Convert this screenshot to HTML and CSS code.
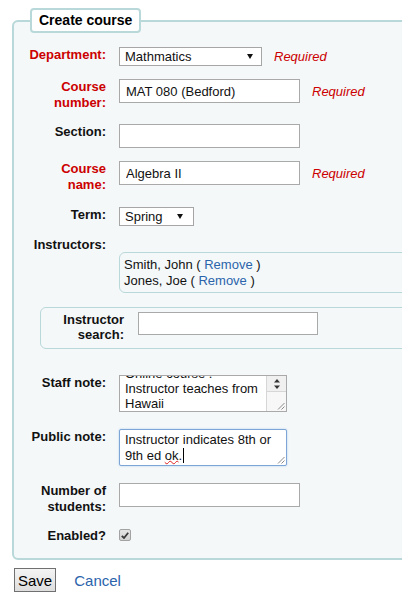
FILE: index.html
```html
<!DOCTYPE html>
<html>
<head>
<meta charset="utf-8">
<title>Create course</title>
<link rel="stylesheet" href="styles.css">
</head>
<body>
<form class="page">
  <fieldset class="main">
    <legend class="legend">Create course</legend>
    <ol class="rows">
      <li class="row mb13">
        <label class="lbl req">Department:</label>
        <span class="ctl">
          <span class="select-wrap w-dept">
            <select class="sel"><option>Mathmatics</option></select>
            <svg class="arrow" width="6" height="5" viewBox="0 0 6 5"><polygon points="0,0 6,0 3,5" fill="#111"/></svg>
          </span>
          <span class="required">Required</span>
        </span>
      </li>
      <li class="row mb13">
        <label class="lbl req">Course number:</label>
        <span class="ctl">
          <input class="txt" type="text" value="MAT 080 (Bedford)">
          <span class="required">Required</span>
        </span>
      </li>
      <li class="row mb13">
        <label class="lbl">Section:</label>
        <span class="ctl"><input class="txt" type="text" value=""></span>
      </li>
      <li class="row mb14">
        <label class="lbl req">Course name:</label>
        <span class="ctl">
          <input class="txt" type="text" value="Algebra II">
          <span class="required">Required</span>
        </span>
      </li>
      <li class="row mb12">
        <label class="lbl">Term:</label>
        <span class="ctl">
          <span class="select-wrap w-term">
            <select class="sel"><option>Spring</option></select>
            <svg class="arrow" width="6" height="5" viewBox="0 0 6 5"><polygon points="0,0 6,0 3,5" fill="#111"/></svg>
          </span>
        </span>
      </li>
      <li class="instr mb14">
        <label class="lbl lbl-instr">Instructors:</label>
        <div class="instr-box">
          <div>Smith, John ( <a class="link" href="#">Remove</a> )</div>
          <div>Jones, Joe ( <a class="link" href="#">Remove</a> )</div>
        </div>
      </li>
      <li class="mb26">
        <div class="search-box">
          <label class="lbl lbl-search">Instructor search:</label>
          <input class="txt txt-search" type="text" value="">
        </div>
      </li>
      <li class="row mb17">
        <label class="lbl">Staff note:</label>
        <div class="ta">
          <div class="ta-text">Online course .<br>Instructor teaches from<br>Hawaii</div>
          <div class="sb">
            <div class="sb-btn">
              <svg width="6" height="10" viewBox="0 0 6 10"><polygon points="3,0 6,3.5 0,3.5" fill="#333"/><polygon points="0,6.5 6,6.5 3,10" fill="#333"/></svg>
            </div>
          </div>
          <svg class="grip" width="9" height="9" viewBox="0 0 9 9"><line x1="8.5" y1="2" x2="2" y2="8.5" stroke="#8a8a8a"/><line x1="8.5" y1="5.5" x2="5.5" y2="8.5" stroke="#8a8a8a"/></svg>
        </div>
      </li>
      <li class="row mb17">
        <label class="lbl">Public note:</label>
        <div class="ta ta-focus">
          <div class="ta-text2">Instructor indicates 8th or<br>9th ed <span class="spell">ok</span>.<span class="caret"></span></div>
          <svg class="grip" width="9" height="9" viewBox="0 0 9 9"><line x1="8.5" y1="2" x2="2" y2="8.5" stroke="#8a8a8a"/><line x1="8.5" y1="5.5" x2="5.5" y2="8.5" stroke="#8a8a8a"/></svg>
        </div>
      </li>
      <li class="row mb13">
        <label class="lbl">Number of students:</label>
        <span class="ctl"><input class="txt" type="text" value=""></span>
      </li>
      <li class="row">
        <label class="lbl">Enabled?</label>
        <span class="chk">
          <svg width="8" height="7" viewBox="0 0 8 7"><polyline points="0.8,3.8 3,6 7.2,0.8" fill="none" stroke="#3a3a3a" stroke-width="1.8"/></svg>
        </span>
      </li>
    </ol>
  </fieldset>
  <div class="actions">
    <button class="btn" type="button">Save</button>
    <a class="cancel" href="#">Cancel</a>
  </div>
</form>
</body>
</html>
```
FILE: styles.css
```css
html, body {
  overflow: hidden;
}
body {
  margin: 8px 0 0 12px;
  font-family: "Liberation Sans", Arial, sans-serif;
  font-size: 13px;
  color: #000;
  background: #fff;
}
.page {
  margin: 0;
}
.main {
  margin: 0 -80px 8px 0;
  padding: 14px 0 14px 14px;
  border: 2px solid #b9d8d9;
  border-radius: 6px;
  background: #f4f8f9;
  min-width: 0;
}
.legend {
  margin-left: 2px;
  padding: 2px 7px;
  border: 2px solid #b9d8d9;
  border-radius: 4px;
  background: #fff;
  font-weight: bold;
  font-size: 14px;
  line-height: 17px;
}
.rows {
  list-style: none;
  margin: 0;
  padding: 0;
}
.row {
  display: flex;
  align-items: flex-start;
}
.mb12 { margin-bottom: 12px; }
.mb13 { margin-bottom: 13px; }
.mb14 { margin-bottom: 14px; }
.mb17 { margin-bottom: 17px; }
.mb26 { margin-bottom: 26px; }
.lbl {
  flex: none;
  width: 78px;
  margin-right: 13px;
  text-align: right;
  font-weight: bold;
  line-height: 16px;
  color: #111;
}
.req {
  color: #c00;
}
.ctl {
  display: flex;
  align-items: center;
  gap: 12px;
}
.required {
  color: #c00;
  font-style: italic;
}
.select-wrap {
  position: relative;
  display: inline-block;
}
.w-dept { width: 143px; }
.w-term { width: 75px; }
.sel {
  -webkit-appearance: none;
  appearance: none;
  display: block;
  box-sizing: border-box;
  width: 100%;
  height: 19px;
  margin: 0;
  padding: 0 16px 0 5px;
  border: 1px solid #a6a6a6;
  border-radius: 0;
  background: #fff;
  color: #111;
  font-family: inherit;
  font-size: 13px;
}
.arrow {
  position: absolute;
  right: 9px;
  top: 7px;
}
.w-term .arrow {
  right: 11px;
}
.txt {
  box-sizing: border-box;
  width: 181px;
  height: 24px;
  margin: 0;
  padding: 0 6px;
  border: 1px solid #a9a9a9;
  background: #fff;
  color: #111;
  font-family: inherit;
  font-size: 13px;
}
.instr {
  display: block;
}
.lbl-instr {
  display: block;
  line-height: 14px;
}
.instr-box {
  margin-left: 91px;
  padding: 4px 4px 3px;
  border: 1px solid #b9d8d9;
  border-radius: 6px;
  line-height: 16px;
  color: #111;
}
.link {
  color: #2b64ab;
  text-decoration: none;
}
.search-box {
  display: flex;
  align-items: flex-start;
  margin-left: 12px;
  padding: 4px 0 6px;
  border: 1px solid #b9d8d9;
  border-radius: 6px;
}
.lbl-search {
  width: 83px;
  margin-right: 14px;
  line-height: 15px;
}
.txt-search {
  width: 180px;
  height: 23px;
}
.ta {
  position: relative;
  display: flex;
  box-sizing: border-box;
  width: 168px;
  height: 37px;
  border: 1px solid #a9a9a9;
  background: #fff;
  overflow: hidden;
  color: #111;
}
.ta-text {
  flex: 1;
  margin-top: -10px;
  padding-left: 5px;
  line-height: 15px;
  white-space: nowrap;
}
.sb {
  flex: none;
  width: 19px;
  border-left: 1px solid #d6d6d6;
  background: #f7f7f7;
}
.sb-btn {
  display: flex;
  align-items: center;
  justify-content: center;
  height: 15px;
  border-bottom: 1px solid #d6d6d6;
  background: #f0f0f0;
}
.grip {
  position: absolute;
  right: 1px;
  bottom: 1px;
}
.ta-focus {
  border-color: #7da6d6;
  border-radius: 2px;
  box-shadow: 0 0 2px #a9c8ea;
}
.ta-text2 {
  padding: 2px 0 0 5px;
  line-height: 16px;
  white-space: nowrap;
}
.spell {
  text-decoration-line: underline;
  text-decoration-style: wavy;
  text-decoration-color: #e02020;
  text-decoration-thickness: 1px;
  text-underline-offset: 0;
}
.caret {
  display: inline-block;
  width: 1px;
  height: 15px;
  margin-left: 1px;
  background: #000;
  vertical-align: -3px;
}
.chk {
  display: flex;
  align-items: center;
  justify-content: center;
  box-sizing: border-box;
  width: 12px;
  height: 12px;
  margin-top: 1px;
  border: 1px solid #a2a2a2;
  border-radius: 2px;
  background: linear-gradient(#e4e4e4, #d2d2d2);
}
.actions {
  display: flex;
  align-items: center;
  gap: 18px;
  margin-left: 2px;
}
.btn {
  box-sizing: border-box;
  height: 24px;
  margin: 0;
  padding: 0 3px;
  border: 1px solid #707070;
  border-radius: 0;
  background: linear-gradient(#f4f4f4, #dedede);
  color: #000;
  font-family: inherit;
  font-size: 15px;
}
.cancel {
  color: #2b64ab;
  text-decoration: none;
  font-size: 15px;
}
```
